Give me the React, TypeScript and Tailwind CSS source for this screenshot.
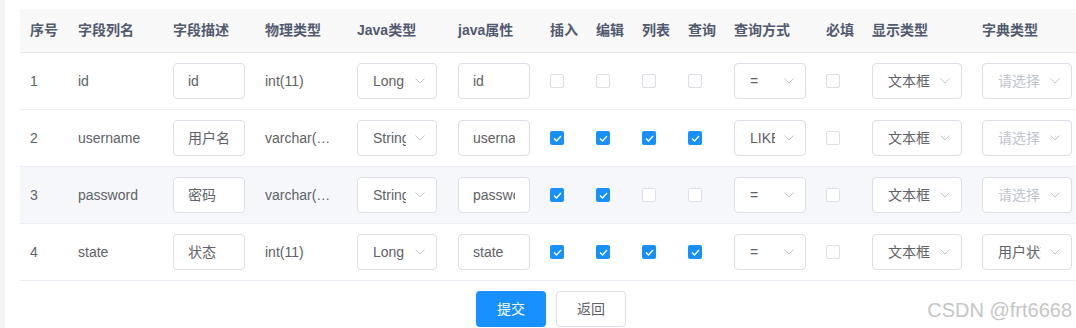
import { ReactNode } from "react";

type Row = {
  no: number;
  name: string;
  desc: string;
  dbType: string;
  javaType: string;
  javaField: string;
  insert: boolean;
  edit: boolean;
  list: boolean;
  query: boolean;
  queryType: string;
  dict: string;
};

const ROWS: Row[] = [
  { no: 1, name: "id", desc: "id", dbType: "int(11)", javaType: "Long", javaField: "id", insert: false, edit: false, list: false, query: false, queryType: "=", dict: "" },
  { no: 2, name: "username", desc: "用户名", dbType: "varchar(…", javaType: "String", javaField: "username", insert: true, edit: true, list: true, query: true, queryType: "LIKE", dict: "" },
  { no: 3, name: "password", desc: "密码", dbType: "varchar(…", javaType: "String", javaField: "password", insert: true, edit: true, list: false, query: false, queryType: "=", dict: "" },
  { no: 4, name: "state", desc: "状态", dbType: "int(11)", javaType: "Long", javaField: "state", insert: true, edit: true, list: true, query: true, queryType: "=", dict: "用户状态" },
];

const HEADERS = ["序号", "字段列名", "字段描述", "物理类型", "Java类型", "java属性", "插入", "编辑", "列表", "查询", "查询方式", "必填", "显示类型", "字典类型"];

const COLS = "grid grid-cols-[48px_95px_92px_92px_101px_92px_46px_46px_46px_46px_92px_46px_110px_104px]";

function Cell({ children }: { children?: ReactNode }) {
  return <div className="flex min-w-0 items-center whitespace-nowrap px-[10px]">{children}</div>;
}

function TextInput({ value }: { value: string }) {
  return (
    <div className="flex h-[36px] w-[72px] shrink-0 items-center rounded-[4px] border border-[#dcdfe6] bg-white px-[14px]">
      <div className="w-full overflow-hidden whitespace-nowrap text-[#606266]">{value}</div>
    </div>
  );
}

function Select({ value, width, placeholder }: { value: string; width: string; placeholder?: string }) {
  return (
    <div className={`flex h-[36px] ${width} shrink-0 items-center rounded-[4px] border border-[#dcdfe6] bg-white pl-[15px] pr-[11px]`}>
      <div className={`min-w-0 flex-1 overflow-hidden whitespace-nowrap ${value ? "text-[#606266]" : "text-[#c0c4cc]"}`}>
        {value || placeholder}
      </div>
      <svg className="ml-[9px] shrink-0" width="10" height="6" viewBox="0 0 10 6" fill="none">
        <path d="M0.5 0.5 L5 5 L9.5 0.5" stroke="#c0c4cc" strokeWidth="1" />
      </svg>
    </div>
  );
}

function Checkbox({ checked }: { checked: boolean }) {
  if (checked) {
    return (
      <div className="flex h-[14px] w-[14px] items-center justify-center rounded-[2px] bg-[#1890ff]">
        <svg width="9" height="7" viewBox="0 0 9 7" fill="none">
          <path d="M1 3.5 L3.5 6 L8 1" stroke="white" strokeWidth="1.3" />
        </svg>
      </div>
    );
  }
  return <div className="h-[14px] w-[14px] rounded-[2px] border border-[#dcdfe6] bg-white" />;
}

export default function App() {
  return (
    <div className="flex h-[328px] w-[1076px] overflow-hidden bg-white font-['Liberation_Sans','Noto_Sans_CJK_SC',sans-serif] text-[14px]">
      <div className="w-[5px] shrink-0 bg-[#f3f4f6]" />
      <div className="relative min-w-0 flex-1 pl-[15px] pt-[9px]">
        <div className={`${COLS} h-[44px] border-b border-[#e4e7ed] bg-[#f8f8f9] font-bold text-[#515a6e]`}>
          {HEADERS.map((h) => (
            <Cell key={h}>{h}</Cell>
          ))}
        </div>

        {ROWS.map((r) => (
          <div
            key={r.no}
            className={`${COLS} h-[57px] border-b border-[#ebeef5] text-[#606266] ${r.no === 3 ? "bg-[#f5f7fa]" : "bg-white"}`}
          >
            <Cell>{r.no}</Cell>
            <Cell>{r.name}</Cell>
            <Cell>
              <TextInput value={r.desc} />
            </Cell>
            <Cell>{r.dbType}</Cell>
            <Cell>
              <Select value={r.javaType} width="w-[80px]" />
            </Cell>
            <Cell>
              <TextInput value={r.javaField} />
            </Cell>
            <Cell>
              <Checkbox checked={r.insert} />
            </Cell>
            <Cell>
              <Checkbox checked={r.edit} />
            </Cell>
            <Cell>
              <Checkbox checked={r.list} />
            </Cell>
            <Cell>
              <Checkbox checked={r.query} />
            </Cell>
            <Cell>
              <Select value={r.queryType} width="w-[72px]" />
            </Cell>
            <Cell>
              <Checkbox checked={false} />
            </Cell>
            <Cell>
              <Select value="文本框" width="w-[90px]" />
            </Cell>
            <Cell>
              <Select value={r.dict} placeholder="请选择" width="w-[90px]" />
            </Cell>
          </div>
        ))}

        <div className="mt-[10px] flex w-[1056px] justify-center gap-[10px] pl-[6px]">
          <button className="h-[36px] w-[70px] rounded-[4px] bg-[#1890ff] text-white">提交</button>
          <button className="h-[36px] w-[70px] rounded-[4px] border border-[#dcdfe6] bg-white text-[#606266]">返回</button>
        </div>

        <div className="absolute bottom-[8px] right-[4px] text-[20px] leading-none text-[#c6c6c6] [text-shadow:0_0_1px_#fff]">
          CSDN @frt6668
        </div>
      </div>
    </div>
  );
}
